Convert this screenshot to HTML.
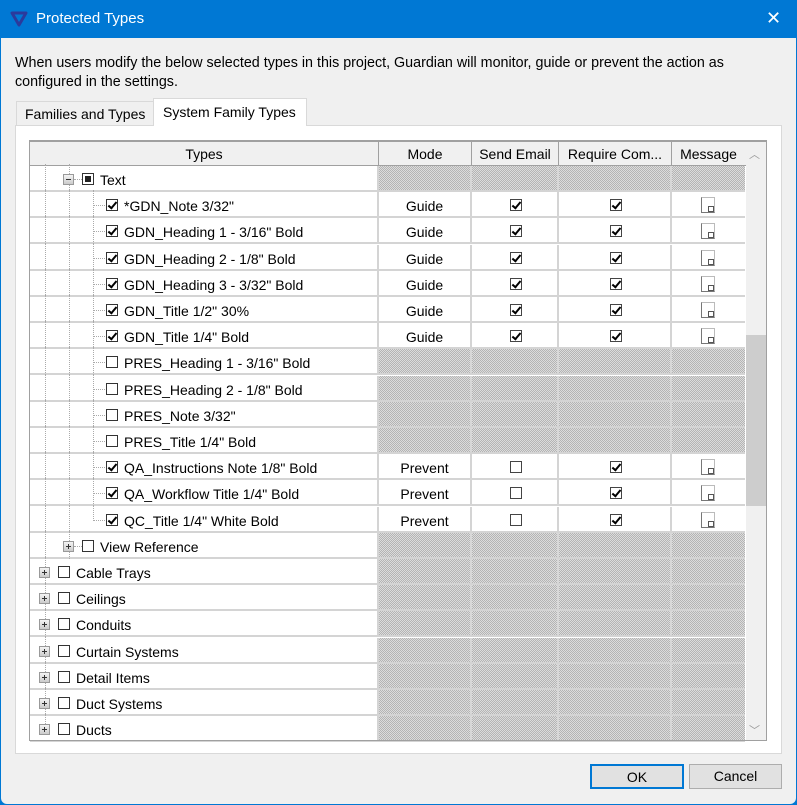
<!DOCTYPE html>
<html><head><meta charset="utf-8"><style>
*{box-sizing:border-box;margin:0;padding:0}
body{width:797px;height:805px;overflow:hidden;font-family:"Liberation Sans",sans-serif;font-size:14px;color:#000;background:#0078d4;position:relative}
.abs{position:absolute}
#win{left:1px;top:38px;width:795px;height:766px;background:#f0f0f0;border-radius:0 0 6px 6px}
#title{left:36px;top:10px;color:#fff;font-size:15px}
.hatch{background-color:#c9c9c9;background-image:repeating-conic-gradient(#b4b4b4 0 25%,#dcdcdc 0 50%);background-size:2px 2px}
.row{position:absolute;left:30px;width:715px;height:26px;border-bottom:2px solid #d4d4d4}
.c{position:absolute;top:0;height:24px;border-right:2px solid #d4d4d4}
.cb{position:absolute;width:12px;height:12px;border:1px solid #333;background:#fff}
.cb.on::after{content:"";position:absolute;left:3px;top:0px;width:3px;height:7px;border:solid #000;border-width:0 2px 2px 0;transform:rotate(40deg)}
.sq{position:absolute;width:12px;height:12px;border:1px solid #444;background:#fff}
.sq.on::after{content:"";position:absolute;left:3px;top:0;width:3px;height:7px;border:solid #000;border-width:0 2px 2px 0;transform:rotate(40deg)}
.msg{position:absolute;width:14px;height:16px;border:1px solid #777;border-top-color:#bbb;border-right-color:#bbb;background:#fff}
.msg::after{content:"";position:absolute;right:0;bottom:0;width:4px;height:4px;border:1px solid #555;background:#fff}
.pm{position:absolute;width:11px;height:11px;border:1px solid #999;background:linear-gradient(#f4f4f4,#ccc)}
.pm::before{content:"";position:absolute;left:2px;top:4px;width:5px;height:1px;background:#333}
.pm.plus::after{content:"";position:absolute;left:4px;top:2px;width:1px;height:5px;background:#333}
.t{position:absolute;top:6px;white-space:nowrap}
.vd{position:absolute;width:1px;border-left:1px dotted #aaa}
.hd{position:absolute;height:1px;border-top:1px dotted #aaa}
.btn{position:absolute;height:25px;background:#e1e1e1;border:1px solid #adadad;text-align:center;line-height:23px}
</style></head><body>
<svg class="abs" style="left:9px;top:10px" width="20" height="18" viewBox="0 0 20 18"><path d="M3 3 L17 3 L10 15 Z" fill="none" stroke="#2b3a9c" stroke-width="3" stroke-linejoin="round"/></svg>
<div class="abs" id="title">Protected Types</div>
<div class="abs" style="left:766px;top:8px;color:#fff;font-size:18px">✕</div>
<div class="abs" id="win"></div>
<div class="abs" style="left:15px;top:54px;width:760px;line-height:19px;font-size:14.3px">When users modify the below selected types in this project, Guardian will monitor, guide or prevent the action as<br>configured in the settings.</div>
<!-- tabs -->
<div class="abs" style="left:16px;top:101px;width:138px;height:25px;border:1px solid #d9d9d9;border-bottom:none;background:#f0f0f0;padding:4px 0 0 8px">Families and Types</div>
<div class="abs" style="left:153px;top:98px;width:154px;height:28px;border:1px solid #d9d9d9;border-bottom:none;background:#fff;padding:5px 0 0 9px;z-index:2">System Family Types</div>
<div class="abs" style="left:15px;top:125px;width:767px;height:629px;border:1px solid #d9d9d9;background:#fff"></div>
<!-- grid -->
<div class="abs" style="left:29px;top:140px;width:738px;height:601px;border:1px solid #a0a0a0;border-top:2px solid #a0a0a0;background:#fff;overflow:hidden">
 <div class="abs" style="left:0;top:0;width:716px;height:24px;background:#f0f0f0;border-bottom:1px solid #a0a0a0">
  <div class="abs" style="left:0;width:349px;height:24px;border-right:1px solid #a0a0a0;text-align:center;line-height:24px">Types</div>
  <div class="abs" style="left:349px;width:93px;height:24px;border-right:1px solid #a0a0a0;text-align:center;line-height:24px">Mode</div>
  <div class="abs" style="left:442px;width:87px;height:24px;border-right:1px solid #a0a0a0;text-align:center;line-height:24px">Send Email</div>
  <div class="abs" style="left:529px;width:113px;height:24px;border-right:1px solid #a0a0a0;text-align:center;line-height:24px">Require Com...</div>
  <div class="abs" style="left:642px;width:73px;height:24px;text-align:center;line-height:24px">Message</div>
 </div>
 <div class="abs" style="left:716px;top:0;width:21px;height:600px;background:#f0f0f0"></div>
 <div class="abs" style="left:719px;top:4px;color:#999;font-size:11px">︿</div>
 <div class="abs" style="left:719px;top:580px;color:#999;font-size:11px">﹀</div>
 <div class="abs" style="left:716px;top:193px;width:21px;height:171px;background:#cdcdcd"></div>
</div>
<div id="rows"></div>
<div class="btn" style="left:590px;top:764px;width:94px;border:2px solid #0078d4">OK</div>
<div class="btn" style="left:689px;top:764px;width:93px">Cancel</div>
<script>
const R=[
[1,'Text','H','m'],
[2,'*GDN_Note 3/32"','Guide',1,1],
[2,'GDN_Heading 1 - 3/16" Bold','Guide',1,1],
[2,'GDN_Heading 2 - 1/8" Bold','Guide',1,1],
[2,'GDN_Heading 3 - 3/32" Bold','Guide',1,1],
[2,'GDN_Title 1/2" 30%','Guide',1,1],
[2,'GDN_Title 1/4" Bold','Guide',1,1],
[2,'PRES_Heading 1 - 3/16" Bold','H',0],
[2,'PRES_Heading 2 - 1/8" Bold','H',0],
[2,'PRES_Note 3/32"','H',0],
[2,'PRES_Title 1/4" Bold','H',0],
[2,'QA_Instructions Note 1/8" Bold','Prevent',0,1],
[2,'QA_Workflow Title 1/4" Bold','Prevent',0,1],
[2,'QC_Title 1/4" White Bold','Prevent',0,1],
[1,'View Reference','H','p'],
[0,'Cable Trays'],[0,'Ceilings'],[0,'Conduits'],[0,'Curtain Systems'],[0,'Detail Items'],[0,'Duct Systems'],[0,'Ducts']];
let h='';
R.forEach((r,i)=>{
 const top=166+i*26.2;
 const lvl=r[0];
 const hatch=lvl==0||r[2]=='H';
 h+=`<div class="row" style="top:${top}px">`;
 h+=`<div class="c" style="left:0;width:349px"></div>`;
 if(hatch){h+=`<div class="c hatch" style="left:349px;width:93px;border-right-color:#d8d8d8"></div><div class="c hatch" style="left:442px;width:87px;border-right-color:#d8d8d8"></div><div class="c hatch" style="left:529px;width:113px;border-right-color:#d8d8d8"></div><div class="c hatch" style="left:642px;width:73px;border-right:none"></div>`;}
 else{
  h+=`<div class="c" style="left:349px;width:93px;text-align:center;line-height:28px">${r[2]}</div>`;
  h+=`<div class="c" style="left:442px;width:87px"><div class="sq ${r[3]?'on':''}" style="left:38px;top:7px"></div></div>`;
  h+=`<div class="c" style="left:529px;width:113px"><div class="sq ${r[4]?'on':''}" style="left:51px;top:7px"></div></div>`;
  h+=`<div class="c" style="left:642px;width:73px;border-right:none"><div class="msg" style="left:29px;top:5px"></div></div>`;
 }
 h+=`<div class="vd" style="left:15px;top:-2px;height:${i==R.length-1?20:28}px"></div>`;
 if(lvl>=1)h+=`<div class="vd" style="left:39px;top:-2px;height:28px"></div>`;
 if(lvl==2){h+=`<div class="vd" style="left:63px;top:-2px;height:${i==13?14:28}px"></div><div class="hd" style="left:63px;top:13px;width:12px"></div><div class="cb ${r[3]||r[2]!='H'?'on':''}" style="left:76px;top:7px"></div><div class="t" style="left:94px">${r[1]}</div>`;}
 if(lvl==1){h+=`<div class="pm ${r[3]=='p'?'plus':''}" style="left:33px;top:8px"></div><div class="hd" style="left:44px;top:13px;width:8px"></div><div class="cb" style="left:52px;top:7px">${r[3]=='m'?'<div style="position:absolute;left:2px;top:2px;width:6px;height:6px;background:#222"></div>':''}</div><div class="t" style="left:70px">${r[1]}</div>`;}
 if(lvl==0){h+=`<div class="pm plus" style="left:9px;top:8px"></div><div class="cb" style="left:28px;top:7px"></div><div class="t" style="left:46px">${r[1]}</div>`;}
 h+=`</div>`;
});
document.getElementById('rows').innerHTML=h;
</script>
<div class="abs" style="left:29px;top:740px;width:738px;height:1px;background:#a0a0a0"></div>
</body></html>
